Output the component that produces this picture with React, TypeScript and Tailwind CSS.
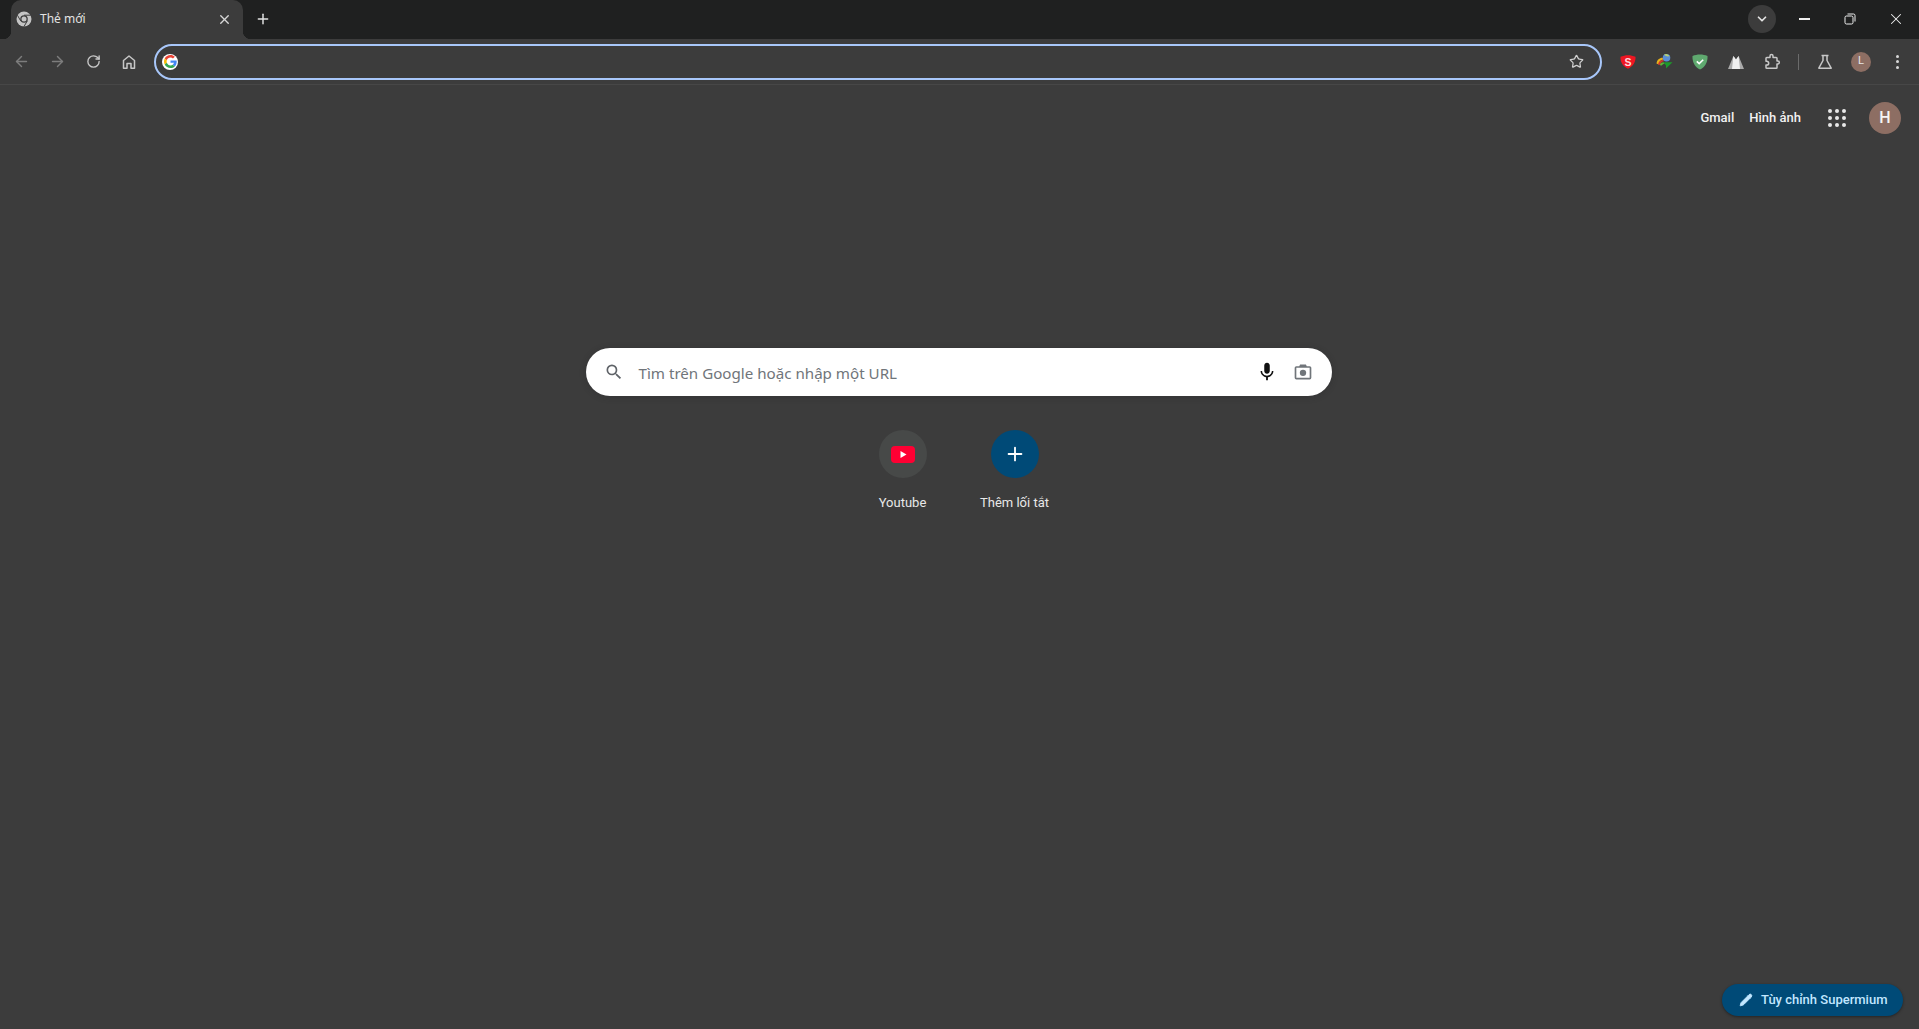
import { ArrowLeft, ArrowRight, RotateCw, X, Plus, Star, ChevronDown, Pencil } from "lucide-react";

function ChromeIcon() {
  return (
    <svg width="16" height="16" viewBox="0 0 16 16" className="shrink-0">
      <circle cx="8" cy="8" r="7.500" fill="#c4c4c4" />
      <circle cx="8" cy="8" r="3.800" fill="#3c3c3c" />
      <circle cx="8" cy="8" r="2.500" fill="#c4c4c4" />
      <path d="M8 4.200h6.800M4.700 9.900L1.400 4.200M11.300 9.900l-3.400 5.800" stroke="#3c3c3c" strokeWidth="1" fill="none" />
    </svg>
  );
}

function GoogleG() {
  return (
    <span className="flex h-4 w-4 items-center justify-center rounded-full bg-white">
      <svg width="13" height="13" viewBox="0 0 48 48">
        <path fill="#EA4335" d="M24 9.500c3.500 0 6.600 1.200 9.100 3.600l6.800-6.800C35.800 2.400 30.400 0 24 0 14.600 0 6.500 5.400 2.600 13.200l7.900 6.200C12.400 13.600 17.700 9.500 24 9.500z" />
        <path fill="#4285F4" d="M46.900 24.500c0-1.600-.1-3.100-.4-4.500H24v9h12.900c-.6 3-2.300 5.500-4.800 7.200l7.700 6c4.500-4.200 7.100-10.300 7.100-17.700z" />
        <path fill="#FBBC05" d="M10.500 28.600c-.5-1.500-.8-3-.8-4.600s.3-3.100.8-4.600l-7.900-6.200C.900 16.500 0 20.100 0 24s.900 7.500 2.600 10.800l7.900-6.200z" />
        <path fill="#34A853" d="M24 48c6.500 0 11.900-2.100 15.900-5.800l-7.700-6c-2.200 1.500-4.900 2.300-8.200 2.300-6.300 0-11.600-4.100-13.500-9.900l-7.900 6.200C6.500 42.600 14.600 48 24 48z" />
      </svg>
    </span>
  );
}

function ToolbarButton({ children }: { children: React.ReactNode }) {
  return <div className="flex h-[36px] w-[36px] shrink-0 items-center justify-center">{children}</div>;
}

function Extensions() {
  return (
    <div className="ml-[8px] flex items-center">
      <ToolbarButton>
        <svg width="16" height="16" viewBox="0 0 16 16">
          <path d="M.5 2.800C2.800 1.700 5.300 1.200 8 1.200s5.200.5 7.500 1.600c.4 4.800-2.200 9.700-7.500 12-5.300-2.300-7.900-7.200-7.500-12z" fill="#ee1622" />
          <text x="8" y="12" textAnchor="middle" fontSize="10.500" fontWeight="700" fill="#ffd9dc" fontFamily="Liberation Sans, sans-serif">S</text>
        </svg>
      </ToolbarButton>
      <ToolbarButton>
        <svg width="17" height="17" viewBox="0 0 17 17">
          <path d="M.5 10.500C1 7 3.500 4.800 6.500 4.800l1 1.700C4.500 6.700 3 8.500 2.800 11.500z" fill="#e8b21a" />
          <path d="M2 11.500C2.500 8.800 4.500 7 7 6.800l1 1.500c-1.800.2-3.300 1.400-3.700 3.700z" fill="#d6362a" />
          <path d="M3.800 12.200c.4-1.800 1.800-2.900 3.700-3l1.300 1.500c-1.300 0-2.300.5-3 1.800z" fill="#5cb535" />
          <circle cx="10.500" cy="4.800" r="3.800" fill="#5b8fd6" />
          <path d="M8 1.800a3.800 3.800 0 0 1 5.500 1.300c-1.500.8-3.500.3-5.500-1.300z" fill="#b8d070" />
          <path d="M7.500 9.300h9l-6.500 6.200v-3z" fill="#1d9a2c" />
        </svg>
      </ToolbarButton>
      <ToolbarButton>
        <svg width="16" height="16" viewBox="0 0 16 16">
          <path d="M8 .5c2.700 0 5.300.5 7.500 1.500.3 5.800-2.200 11-7.500 13.500C2.700 13 .2 7.800.5 2 2.700 1 5.300.5 8 .5z" fill="#5fa96f" />
          <path d="M4.800 7.300l2.400 2.300 4-3.900" stroke="#fff" strokeWidth="1.600" fill="none" />
        </svg>
      </ToolbarButton>
      <ToolbarButton>
        <svg width="16" height="14" viewBox="0 0 16 14">
          <path d="M0 14L5.400 1 8 4.500 10.600 1 16 14z" fill="#ababab" />
          <path d="M5.400 1L4 14h8L10.600 1 8 4.500z" fill="#efefef" />
        </svg>
      </ToolbarButton>
      <ToolbarButton>
        <svg width="18" height="18" viewBox="0 0 18 18" fill="none" stroke="#c7c7c7" strokeWidth="1.500" strokeLinejoin="round">
          <path d="M3 5.200a.8.8 0 0 1 .8-.8H7V3.100a1.500 1.500 0 0 1 3 0v1.300h3.200a.8.800 0 0 1 .8.800v2.900h.9a1.400 1.400 0 0 1 0 2.800H14v3.600a.8.800 0 0 1-.8.8H3.800a.8.800 0 0 1-.8-.8v-2.400h.8a1.900 1.900 0 0 0 0-3.800H3z" />
        </svg>
      </ToolbarButton>
    </div>
  );
}

export default function App() {
  return (
    <div className="flex h-[1029px] w-full flex-col overflow-hidden bg-[#3c3c3c] font-['Roboto',sans-serif]">
      <div className="flex h-[39px] shrink-0 items-stretch bg-[#1f2020] pl-[11px]">
        <div className="relative flex w-[232px] items-center rounded-t-[10px] bg-[#3c3c3c] pb-[1px] pl-[5px] pr-[11px]">
          <ChromeIcon />
          <span className="ml-[8px] flex-1 font-['Noto_Sans',sans-serif] text-[12px] text-[#e3e3e3]">Thẻ mới</span>
          <X size={15} color="#d8d8d8" strokeWidth={2.200} />
          <span className="absolute -left-[8px] bottom-0 h-[8px] w-[8px] bg-[radial-gradient(circle_at_0_0,#1f2020_8px,#3c3c3c_8.500px)]" />
          <span className="absolute -right-[8px] bottom-0 h-[8px] w-[8px] bg-[radial-gradient(circle_at_100%_0,#1f2020_8px,#3c3c3c_8.500px)]" />
        </div>
        <div className="ml-[4px] flex w-[32px] items-center justify-center pb-[1px]">
          <Plus size={16} color="#e3e3e3" strokeWidth={2.200} />
        </div>
        <div className="flex-1" />
        <div className="flex items-center pb-[1px]">
          <div className="mr-[5px] flex h-[28px] w-[28px] items-center justify-center rounded-full bg-[#3c3c3c]">
            <ChevronDown size={14} color="#e3e3e3" strokeWidth={3} />
          </div>
          <div className="flex w-[46px] items-center justify-center">
            <span className="h-[1.500px] w-[11px] bg-[#f0f0f0]" />
          </div>
          <div className="flex w-[46px] items-center justify-center">
            <svg width="12" height="12" viewBox="0 0 12 12" fill="none" stroke="#f0f0f0">
              <rect x="1" y="3" width="8" height="8" rx="1.500" />
              <path d="M3.500 1h6a1.500 1.500 0 0 1 1.500 1.500v6" />
            </svg>
          </div>
          <div className="flex w-[46px] items-center justify-center">
            <X size={18} color="#f0f0f0" strokeWidth={1.400} />
          </div>
        </div>
      </div>

      <div className="flex h-[46px] shrink-0 items-center border-b border-[#474747] pl-[3px] pr-[4px]">
        <ToolbarButton><ArrowLeft size={17} color="#7d7d7d" strokeWidth={2} /></ToolbarButton>
        <ToolbarButton><ArrowRight size={17} color="#7d7d7d" strokeWidth={2} /></ToolbarButton>
        <ToolbarButton><RotateCw size={15} color="#c7c7c7" strokeWidth={2.200} /></ToolbarButton>
        <ToolbarButton>
          <svg width="16" height="16" viewBox="0 0 16 16" fill="none" stroke="#c7c7c7" strokeWidth="1.500" strokeLinejoin="round">
            <path d="M2.500 14.200V6.500L8 2l5.500 4.500v7.700h-3.500V9.500H6v4.700z" />
          </svg>
        </ToolbarButton>
        <div className="ml-[7px] flex h-[36px] flex-1 items-center rounded-full border-2 border-[#a8c7fa] pl-[6px] pr-[16px]">
          <GoogleG />
          <div className="flex-1" />
          <Star size={15} color="#d0d0d0" strokeWidth={2} />
        </div>
        <Extensions />
        <div className="mx-[8px] h-[16px] w-[1px] bg-[#6b6b6b]" />
        <ToolbarButton>
          <svg width="16" height="16" viewBox="0 0 16 16" fill="none" stroke="#c7c7c7" strokeWidth="1.500" strokeLinejoin="round">
            <path d="M4.500 1.500h7M6 1.500v5L1.800 14.200h12.400L10 6.500v-5" />
          </svg>
        </ToolbarButton>
        <ToolbarButton>
          <div className="flex h-[20px] w-[20px] items-center justify-center rounded-full bg-[#8d6e63] text-[11px] text-[#e8e8e8]">L</div>
        </ToolbarButton>
        <ToolbarButton>
          <div className="flex flex-col gap-[2.500px]">
            <span className="h-[3px] w-[3px] rounded-full bg-[#d8d8d8]" />
            <span className="h-[3px] w-[3px] rounded-full bg-[#d8d8d8]" />
            <span className="h-[3px] w-[3px] rounded-full bg-[#d8d8d8]" />
          </div>
        </ToolbarButton>
      </div>

      <div className="relative flex flex-1 flex-col">
        <div className="flex h-[66px] items-center justify-end pr-[18px] text-[13px] font-medium text-[#f1f1f1]">
          <span>Gmail</span>
          <span className="ml-[15px]">Hình ảnh</span>
          <div className="ml-[27px] grid grid-cols-3 gap-[3px]">
            {[0, 1, 2, 3, 4, 5, 6, 7, 8].map((i) => (
              <span key={i} className="h-[4px] w-[4px] rounded-full bg-[#e8e8e8]" />
            ))}
          </div>
          <div className="ml-[23px] flex h-[32px] w-[32px] items-center justify-center rounded-full bg-[#8d6e63] text-[16px] text-[#f5f5f5]">H</div>
        </div>

        <div className="mt-[197px] flex flex-col items-center">
          <div className="mr-[2px] flex h-[48px] w-[746px] items-center rounded-full bg-white pl-[18px] pr-[19px] shadow-[0_1px_6px_rgba(32,33,36,0.28)]">
            <svg width="20" height="20" viewBox="0 0 24 24" fill="#5f6368">
              <path d="M15.500 14h-.79l-.28-.27A6.470 6.470 0 0 0 16 9.500 6.500 6.500 0 1 0 9.500 16c1.610 0 3.090-.59 4.230-1.570l.27.28v.79l5 4.990L20.490 19l-4.990-5zm-6 0C7.010 14 5 11.990 5 9.500S7.010 5 9.500 5 14 7.010 14 9.500 11.990 14 9.500 14z" />
            </svg>
            <span className="ml-[15px] flex-1 pt-[2px] font-['Noto_Sans',sans-serif] text-[15.150px] text-[#70757a]">Tìm trên Google hoặc nhập một URL</span>
            <svg width="22" height="22" viewBox="0 0 24 24" fill="#111">
              <path d="M12 14c1.660 0 3-1.340 3-3V5c0-1.660-1.340-3-3-3S9 3.340 9 5v6c0 1.660 1.340 3 3 3zm5.300-3c0 3-2.540 5.100-5.300 5.100S6.700 14 6.700 11H5c0 3.410 2.720 6.230 6 6.720V21h2v-3.280c3.280-.48 6-3.300 6-6.720h-1.700z" />
            </svg>
            <svg width="20" height="20" viewBox="0 0 24 24" className="ml-[15px]">
              <path fill="#70757a" fillRule="evenodd" d="M4 5h3.500l1-2h7l1 2H20a2 2 0 0 1 2 2v12a2 2 0 0 1-2 2H4a2 2 0 0 1-2-2V7a2 2 0 0 1 2-2zm0 2v12h16V7z" />
              <circle cx="12" cy="13" r="3.800" fill="#70757a" />
            </svg>
          </div>

          <div className="mt-[34px] flex gap-[32px] pr-[2px]">
            <div className="flex w-[80px] flex-col items-center">
              <div className="flex h-[48px] w-[48px] items-center justify-center rounded-full bg-[#474948]">
                <svg width="24" height="17" viewBox="0 0 24 17">
                  <rect width="24" height="17" rx="4" fill="#ff0033" />
                  <path d="M9.500 5v7l6-3.500z" fill="#fff" />
                </svg>
              </div>
              <span className="mt-[15px] text-[13px] text-[#e8e8e8]">Youtube</span>
            </div>
            <div className="flex w-[80px] flex-col items-center">
              <div className="flex h-[48px] w-[48px] items-center justify-center rounded-full bg-[#004a77]">
                <Plus size={22} color="#fff" strokeWidth={2} />
              </div>
              <span className="mt-[15px] whitespace-nowrap text-[13px] text-[#e8e8e8]">Thêm lối tắt</span>
            </div>
          </div>
        </div>

        <div className="absolute bottom-[13px] right-[16px] flex h-[32px] w-[181px] items-center rounded-full bg-[#004a77] pl-[17px] text-[13px] font-medium text-[#c2e7ff] shadow-[0_1px_3px_rgba(0,0,0,0.4)]">
          <Pencil size={14} color="#c2e7ff" fill="#c2e7ff" strokeWidth={1.500} />
          <span className="ml-[8px]">Tùy chỉnh Supermium</span>
        </div>
      </div>
    </div>
  );
}
